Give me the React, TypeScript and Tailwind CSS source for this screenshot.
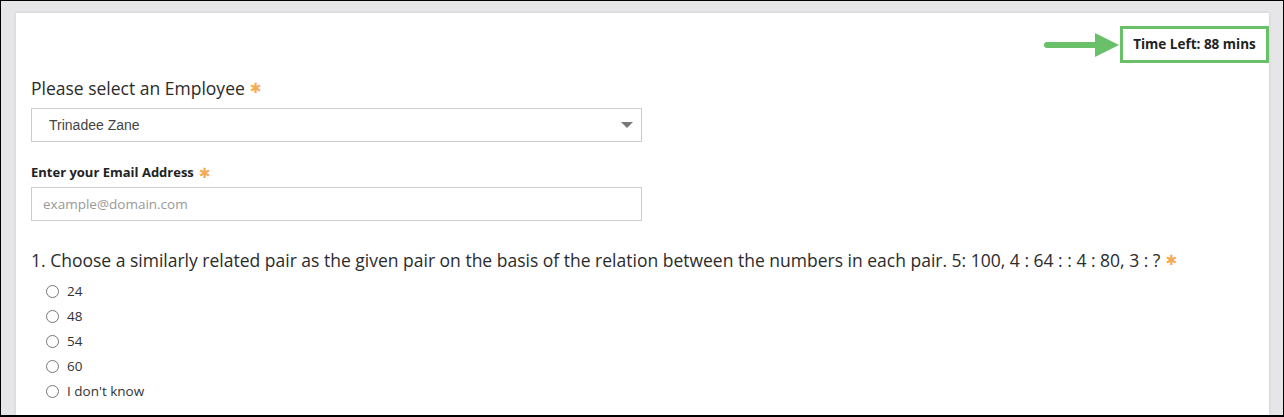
import React from "react";

const Star = () => (
  <span className="text-[#f3ac55] ml-[5px] text-[14px] font-bold" style={{ fontFamily: "'DejaVu Sans', sans-serif" }}>✱</span>
);

export default function App() {
  const options = ["24", "48", "54", "60", "I don't know"];
  return (
    <div className="w-[1284px] h-[417px] bg-[#e6e6e8] border-t border-l border-r border-b-2 border-black overflow-hidden flex flex-col" style={{ fontFamily: "'Open Sans', 'Noto Sans', sans-serif" }}>
      <div className="ml-[15px] mr-[14px] mt-[12px] flex-1 bg-white shadow-[0_0_3px_rgba(0,0,0,0.12)] px-[15px] pt-[13px]">
        <div className="flex justify-end items-center -mr-[15px]">
          <svg width="78" height="26" viewBox="0 0 78 26">
            <line x1="5" y1="13" x2="56" y2="13" stroke="#6abf69" strokeWidth="6" strokeLinecap="round" />
            <polygon points="53,1 77,13 53,25" fill="#6abf69" />
          </svg>
          <div className="border-[3px] border-[#6abf69] h-[37px] w-[149px] flex items-center justify-center text-[13.5px] font-bold text-[#222]">
            Time Left: 88 mins
          </div>
        </div>
        <div className="mt-[13px] text-[17.5px] text-[#2b2b2b] flex items-center h-[24px]">
          Please select an Employee<Star />
        </div>
        <div className="mt-[8px] w-[611px] h-[34px] border border-[#cccccc] flex items-center justify-between pl-[17px] pr-[8px]">
          <span className="text-[14px] text-[#444]" style={{ fontFamily: "'Liberation Sans', Arial, sans-serif" }}>Trinadee Zane</span>
          <svg width="12" height="8" viewBox="0 0 12 8"><polygon points="0,1 12,1 6,7" fill="#777" /></svg>
        </div>
        <div className="mt-[22px] text-[13px] font-bold text-[#222] flex items-center h-[18px]">
          Enter your Email Address<Star />
        </div>
        <div className="mt-[5px] w-[611px] h-[34px] border border-[#cccccc] flex items-center pl-[11px]">
          <span className="text-[13.5px] text-[#999]">example@domain.com</span>
        </div>
        <div className="mt-[27px] text-[17.5px] text-[#2b2b2b] flex items-center h-[24px] whitespace-nowrap">
          1. Choose a similarly related pair as the given pair on the basis of the relation between the numbers in each pair. 5: 100, 4 : 64 : : 4 : 80, 3 : ?<Star />
        </div>
        <div className="mt-[7px] flex flex-col pl-[15px]">
          {options.map((o) => (
            <div key={o} className="h-[25px] flex items-center gap-[8px]">
              <span className="w-[13px] h-[13px] rounded-full border border-[#767676] bg-white" />
              <span className="text-[13.5px] text-[#333]">{o}</span>
            </div>
          ))}
        </div>
      </div>
    </div>
  );
}
